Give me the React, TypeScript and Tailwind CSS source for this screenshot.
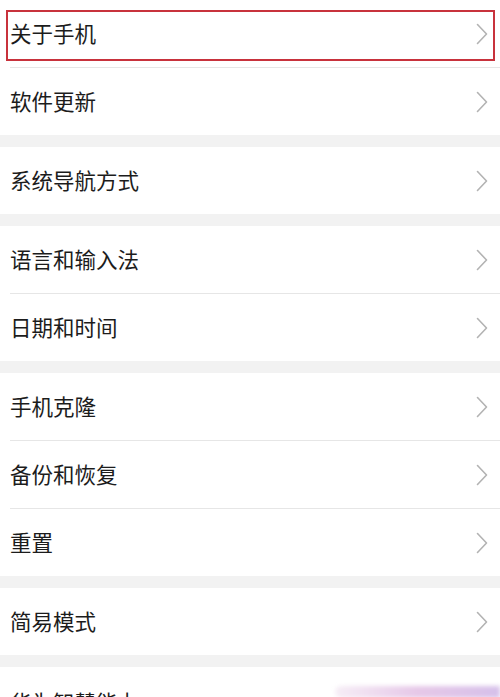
import React from "react"

type Section = string[]

const sections: Section[] = [
    ["关于手机", "软件更新"],
    ["系统导航方式"],
    ["语言和输入法", "日期和时间"],
    ["手机克隆", "备份和恢复", "重置"],
    ["简易模式"],
]

function Chevron() {
    return (
        <svg width="12" height="22" viewBox="0 0 12 22" fill="none" className="shrink-0">
            <path d="M1.5 1.5 L10.5 11 L1.5 20.5" stroke="#b3b3b3" strokeWidth="1.6" strokeLinecap="round" strokeLinejoin="round" />
        </svg>
    )
}

function Row({ label, first, highlight }: { label: string; first: boolean; highlight?: boolean }) {
    return (
        <div className="relative">
            {!first && <div className="ml-[10px] h-px bg-[#e6e6e6]" />}
            <div className="flex h-[67px] items-center justify-between pl-[10px] pr-[12px]">
                <span className="-mt-[2px] text-[21.5px] leading-none text-[#1c1c1c]">{label}</span>
                <Chevron />
            </div>
            {highlight && (
                <div className="absolute left-[6px] top-[10px] h-[51px] w-[489px] border-2 border-[#c8323c]" />
            )}
        </div>
    )
}

export default function App() {
    return (
        <div
            className="relative h-[697px] w-[500px] overflow-hidden bg-[#f2f2f2]"
            style={{ fontFamily: '"Noto Sans CJK SC", "Noto Sans", sans-serif' }}
        >
            <div className="flex flex-col gap-[12px]">
                {sections.map((items, si) => (
                    <div key={si} className="bg-white">
                        {items.map((label, i) => (
                            <Row key={label} label={label} first={i === 0} highlight={si === 0 && i === 0} />
                        ))}
                    </div>
                ))}
                <div className="relative h-[40px] bg-white pl-[10px] pt-[24px]">
                    <span className="text-[21.5px] leading-none text-[#1c1c1c]">华为智慧能力</span>
                    <div className="absolute right-0 top-[19px] h-[12px] w-[165px] rounded-l-full bg-gradient-to-r from-[#f6eef6] via-[#e6c8e8] to-[#d6c0ea] blur-[2px]" />
                </div>
            </div>
        </div>
    )
}
